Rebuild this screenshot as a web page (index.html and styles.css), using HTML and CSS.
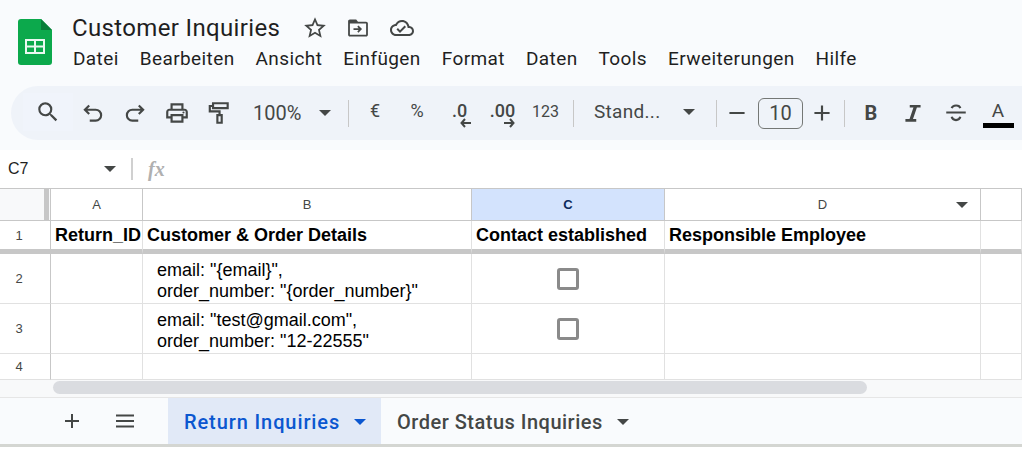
FILE: index.html
```html
<!DOCTYPE html>
<html lang="en">
<head>
    <meta charset="UTF-8">
    <meta name="viewport" content="width=device-width, initial-scale=1.0">
    <title>Customer Inquiries</title>
    <link rel="stylesheet" href="styles.css">
</head>
<body>
    <header class="top">
        <div class="titlebar">
            <svg class="logo" viewBox="0 0 34 46">
                <path d="M3 0H23L34 11V43a3 3 0 0 1-3 3H3a3 3 0 0 1-3-3V3a3 3 0 0 1 3-3z" fill="#0ca94c"/>
                <path d="M23 0L34 11H23z" fill="#0a7f3a"/>
                <path d="M7 20H27V35H7zM9 22V26.500H16V22zM18 22V26.500H25V22zM9 28.500V33H16V28.500zM18 28.500V33H25V28.500z" fill="#fff" fill-rule="evenodd" opacity=".92"/>
            </svg>
            <div class="titletext">
                <div class="docline">
                    <h1>Customer Inquiries</h1>
                    <svg class="star" viewBox="0 0 24 24"><path d="M22 9.240l-7.190-.620L12 2 9.190 8.630 2 9.240l5.460 4.730L5.820 21 12 17.270 18.180 21l-1.630-7.030L22 9.240zM12 15.400l-3.760 2.270 1-4.280-3.320-2.880 4.380-.380L12 6.100l1.710 4.040 4.380.380-3.320 2.880 1 4.280L12 15.400z"/></svg>
                    <svg class="folder" viewBox="0 0 24 20"><path d="M21 3H12L10 0.500H3C1.900 0.500 1 1.400 1 2.500V17.500C1 18.600 1.900 19.500 3 19.500H21C22.100 19.500 23 18.600 23 17.500V5C23 3.900 22.100 3 21 3zM21 17.500H3V5H21V17.500zM12.500 7.200L11.200 8.500 12.700 10.200H7V12.200H12.700L11.200 13.900 12.500 15.200 16.500 11.200z" fill-rule="evenodd"/></svg>
                    <svg class="cloud" viewBox="0 0 24 24"><path d="M19.350 10.040C18.670 6.590 15.640 4 12 4 9.110 4 6.600 5.640 5.350 8.040 2.340 8.360 0 10.910 0 14c0 3.310 2.690 6 6 6h13c2.760 0 5-2.240 5-5 0-2.640-2.050-4.780-4.650-4.960zM19 18H6c-2.210 0-4-1.790-4-4 0-2.050 1.530-3.760 3.560-3.970l1.070-.110.500-.950C8.080 7.140 9.940 6 12 6c2.620 0 4.880 1.860 5.390 4.430l.300 1.500 1.530.110c1.560.100 2.780 1.410 2.780 2.960 0 1.650-1.350 3-3 3zm-9-3.820l-2.090-2.090L6.500 13.500 10 17l6.010-6.010-1.410-1.410z"/></svg>
                </div>
                <nav class="menu">
                    <span>Datei</span>
                    <span>Bearbeiten</span>
                    <span>Ansicht</span>
                    <span>Einfügen</span>
                    <span>Format</span>
                    <span>Daten</span>
                    <span>Tools</span>
                    <span>Erweiterungen</span>
                    <span>Hilfe</span>
                </nav>
            </div>
        </div>

        <div class="toolbar">
            <div class="tool search">
                <svg class="icon" viewBox="0 0 24 24"><path d="M15.500 14h-.790l-.280-.270A6.471 6.471 0 0 0 16 9.500 6.500 6.500 0 1 0 9.500 16c1.610 0 3.090-.590 4.230-1.570l.270.280v.790l5 4.990L20.490 19l-4.990-5zm-6 0C7.010 14 5 11.990 5 9.500S7.010 5 9.500 5 14 7.010 14 9.500 11.990 14 9.500 14z"/></svg>
            </div>
            <div class="tool w40"><svg class="icon line" viewBox="0 0 24 24"><path d="M8.500 5L4.500 9L8.500 13M4.500 9H14.500a5 5 0 0 1 0 10H9"/></svg></div>
            <div class="tool w43"><svg class="icon line" viewBox="0 0 24 24"><path d="M15.500 5L19.500 9L15.500 13M19.500 9H9.500a5 5 0 0 0 0 10H15"/></svg></div>
            <div class="tool w42"><svg class="icon" viewBox="0 0 24 24"><path d="M19 8h-1V3H6v5H5c-1.660 0-3 1.340-3 3v6h4v4h12v-4h4v-6c0-1.660-1.340-3-3-3zM8 5h8v3H8V5zm8 14H8v-4h8v4zm2-4v-2H6v2H4v-4c0-.550.450-1 1-1h14c.550 0 1 .450 1 1v4h-2z"/><circle cx="18" cy="11.500" r="1"/></svg></div>
            <div class="tool w42"><svg class="icon line" viewBox="0 0 24 24"><path d="M6.500 3H20V7.500H6.500zM6.500 5.500H3.500V10.500H12.500V14M10.500 14H14.500V21H10.500z"/></svg></div>
            <div class="tool zoom"><span>100%</span><i class="caret"></i></div>
            <i class="sep"></i>
            <div class="tool w42 sym">€</div>
            <div class="tool w42 sym">%</div>
            <div class="tool w43 dec">
                <span>.0</span>
                <svg class="arrow left" viewBox="0 0 12 10"><path d="M5 1L1.500 5L5 9M2 5H11"/></svg>
            </div>
            <div class="tool w43 dec">
                <span>.00</span>
                <svg class="arrow right" viewBox="0 0 12 10"><path d="M7 1L10.500 5L7 9M10 5H1"/></svg>
            </div>
            <div class="tool w43 num">123</div>
            <i class="sep sep-font"></i>
            <div class="tool fontname"><span>Stand...</span><i class="caret"></i></div>
            <i class="sep"></i>
            <div class="tool minus"><svg class="icon line" viewBox="0 0 24 24"><path d="M5 12H19"/></svg></div>
            <div class="sizebox">10</div>
            <div class="tool w40"><svg class="icon line" viewBox="0 0 24 24"><path d="M5 12H19M12 5V19"/></svg></div>
            <i class="sep sep-format"></i>
            <div class="tool w42 bold">B</div>
            <div class="tool w42"><svg class="icon" viewBox="0 0 24 24"><path d="M9 4.500H19V7H15.600L12 17.500H15V20H5V17.500H8.800L12.400 7H9z"/></svg></div>
            <div class="tool w43"><svg class="icon line" viewBox="0 0 24 24"><path d="M3 11.500H21M8 7.500C9 4.500 15 4 16 7.500M8 15.500C9 19.500 15 19.500 16 15.500"/></svg></div>
            <div class="tool w42 color"><span>A</span><i class="colorbar"></i></div>
        </div>
    </header>

    <div class="formula">
        <span class="cellname">C7</span>
        <i class="caret"></i>
        <i class="formula-sep"></i>
        <span class="fx">fx</span>
    </div>

    <div class="sheet">
        <div class="corner"><i class="freeze"></i></div>
        <div class="col">A</div>
        <div class="col">B</div>
        <div class="col col-active">C</div>
        <div class="col col-menu">D<i class="caret"></i></div>
        <div class="col"></div>

        <div class="rownum head-row">1</div>
        <div class="cell head-row head">Return_ID</div>
        <div class="cell head-row head">Customer &amp; Order Details</div>
        <div class="cell head-row head">Contact established</div>
        <div class="cell head-row head">Responsible Employee</div>
        <div class="cell head-row"></div>

        <div class="rownum">2</div>
        <div class="cell"></div>
        <div class="cell details">email: "{email}",<br>order_number: "{order_number}"</div>
        <div class="cell check"><i class="checkbox"></i></div>
        <div class="cell"></div>
        <div class="cell"></div>

        <div class="rownum">3</div>
        <div class="cell"></div>
        <div class="cell details">email: "test@gmail.com",<br>order_number: "12-22555"</div>
        <div class="cell check"><i class="checkbox"></i></div>
        <div class="cell"></div>
        <div class="cell"></div>

        <div class="rownum">4</div>
        <div class="cell"></div>
        <div class="cell"></div>
        <div class="cell"></div>
        <div class="cell"></div>
        <div class="cell"></div>
    </div>

    <div class="scrollrow"><div class="thumb"></div></div>

    <footer class="tabs">
        <svg class="tabicon add" viewBox="0 0 24 24"><path d="M5 12H19M12 5V19"/></svg>
        <svg class="tabicon all" viewBox="0 0 24 24"><path d="M3 6.500H21M3 12H21M3 17.500H21"/></svg>
        <div class="tab tab-active">Return Inquiries<i class="caret"></i></div>
        <div class="tab">Order Status Inquiries<i class="caret"></i></div>
    </footer>
</body>
</html>
```

FILE: styles.css
```css
* {
    margin: 0;
    padding: 0;
    box-sizing: border-box;
}

body {
    width: 1022px;
    height: 449px;
    overflow: hidden;
    background: #fff;
    font-family: Roboto, 'Liberation Sans', sans-serif;
    color: #444746;
}

i {
    display: block;
}

.caret {
    width: 0;
    height: 0;
    border-left: 6px solid transparent;
    border-right: 6px solid transparent;
    border-top: 6px solid #444746;
}

/* header */
.top {
    height: 150px;
    background: #f9fbfd;
    padding-top: 14px;
}

.titlebar {
    display: flex;
    height: 58px;
}

.logo {
    width: 34px;
    height: 46px;
    margin: 5px 20px 0 18px;
}

.docline {
    display: flex;
    align-items: center;
    height: 28px;
}

h1 {
    font-size: 24px;
    font-weight: 400;
    letter-spacing: .35px;
    color: #1f1f1f;
    width: 230px;
}

.docline svg {
    fill: #444746;
}

.star {
    width: 26px;
    height: 26px;
}

.folder {
    width: 22px;
    height: 18px;
    margin-left: 19px;
}

.cloud {
    width: 24px;
    height: 24px;
    margin-left: 21px;
}

.menu {
    display: flex;
    gap: 21px;
    font-size: 19px;
    letter-spacing: .4px;
    line-height: 24px;
    margin: 5px 0 0 1px;
    color: #1f1f1f;
}

.toolbar {
    display: flex;
    align-items: center;
    height: 54px;
    margin: 14px 0 0 11px;
    padding-left: 12px;
    background: #eff3f9;
    border-radius: 27px 0 0 27px;
    overflow: hidden;
}

.tool {
    display: flex;
    align-items: center;
    justify-content: center;
    flex: none;
    height: 36px;
}

.w40 { width: 40px; }
.w42 { width: 42px; }
.w43 { width: 43px; }

.search {
    width: 50px;
    height: 38px;
    background: #f0f4fb;
    margin-top: -2px;
}

.icon {
    width: 26px;
    height: 26px;
    fill: #444746;
}

.icon.line {
    fill: none;
    stroke: #444746;
    stroke-width: 2;
}

.zoom {
    width: 98px;
    font-size: 20px;
    justify-content: flex-start;
    padding-left: 13px;
}

.zoom .caret {
    margin-left: 18px;
}

.sep {
    flex: none;
    width: 1px;
    height: 27px;
    background: #c7c7c7;
    margin: 0 5px 0 10px;
}

.sym {
    font-size: 18px;
    margin-top: -5px;
}

.dec {
    position: relative;
    font-size: 18px;
    font-weight: 500;
}

.dec span {
    margin-top: -6px;
}

.arrow {
    position: absolute;
    width: 12px;
    height: 10px;
    top: 23px;
    left: 22px;
    fill: none;
    stroke: #444746;
    stroke-width: 2;
}

.num {
    font-size: 16px;
    margin-top: -4px;
}

.sep-font {
    margin: 0 0 0 6px;
}

.fontname {
    width: 132px;
    font-size: 19px;
    letter-spacing: .3px;
    justify-content: flex-start;
    padding-left: 20px;
    margin-top: -3px;
}

.fontname .caret {
    margin-left: 23px;
}

.minus {
    width: 30px;
    margin-right: 6px;
}

.sizebox {
    flex: none;
    width: 45px;
    height: 31px;
    border: 1px solid #747775;
    border-radius: 6px;
    font-size: 20px;
    line-height: 28px;
    text-align: center;
    margin-right: -1px;
}

.sep-format {
    margin: 0 5px 0 2px;
}

.bold {
    font-size: 20px;
    font-weight: 700;
}

.color {
    flex-direction: column;
    font-size: 19px;
    line-height: 18px;
    margin-top: 3px;
}

.colorbar {
    width: 31px;
    height: 5px;
    background: #000;
    margin-top: 3px;
}

/* formula bar */
.formula {
    display: flex;
    align-items: center;
    height: 38px;
    background: #fff;
    padding: 0 0 0 8px;
}

.cellname {
    width: 96px;
    font-size: 16px;
    font-family: 'Liberation Sans', sans-serif;
    color: #1f1f1f;
}

.formula-sep {
    width: 2px;
    height: 22px;
    background: #d0d0d0;
    margin: 0 15px 0 15px;
}

.fx {
    font-family: 'Liberation Serif', serif;
    font-style: italic;
    font-weight: 700;
    font-size: 20px;
    color: #b0b0b0;
}

/* sheet */
.sheet {
    display: grid;
    grid-template-columns: 51px 92px 329px 193px 316px 41px;
    grid-template-rows: 32px 33px 50px 50px 26px;
    font-family: 'Liberation Sans', sans-serif;
    border-top: 1px solid #c7c7c7;
    height: 192px;
}

.corner {
    background: #f8f9fa;
    border-right: 1px solid #c7c7c7;
    border-bottom: 1px solid #c7c7c7;
    display: flex;
    justify-content: flex-end;
}

.freeze {
    width: 5px;
    background: #c7c7c7;
    margin-right: 1px;
}

.col {
    display: flex;
    align-items: center;
    justify-content: center;
    position: relative;
    font-size: 13px;
    color: #444746;
    border-right: 1px solid #c7c7c7;
    border-bottom: 1px solid #c7c7c7;
}

.col-active {
    background: #d3e3fd;
    font-weight: 700;
    color: #0b2a5c;
}

.col-menu .caret {
    position: absolute;
    right: 12px;
    top: 13px;
}

.rownum {
    display: flex;
    align-items: center;
    justify-content: center;
    padding-right: 12px;
    font-size: 13px;
    color: #444746;
    border-right: 1px solid #c7c7c7;
    border-bottom: 1px solid #e1e1e1;
}

.cell {
    border-right: 1px solid #e1e1e1;
    border-bottom: 1px solid #e1e1e1;
    font-size: 18px;
    color: #000;
    white-space: nowrap;
    overflow: hidden;
}

.head-row {
    border-bottom: 5px solid #c7c7c7;
}

.head {
    font-weight: 700;
    padding: 4px 0 0 4px;
    line-height: 20px;
}

.details {
    padding: 6px 0 0 14px;
    line-height: 21px;
}

.check {
    display: flex;
    align-items: center;
    justify-content: center;
}

.checkbox {
    width: 22px;
    height: 22px;
    border: 3px solid #8a8a8a;
    border-radius: 3px;
}

.scrollrow {
    height: 17px;
    background: #f8f9fa;
    padding: 1px 0 2px 53px;
}

.thumb {
    width: 814px;
    height: 13px;
    background: #dadce0;
    border-radius: 7px;
}

/* tabs */
.tabs {
    display: flex;
    align-items: center;
    height: 50px;
    background: #f9fbfd;
    border-top: 1px solid #e6e6e6;
    border-bottom: 3px solid #d4d6d2;
}

.tabicon {
    flex: none;
    width: 24px;
    height: 24px;
    fill: none;
    stroke: #444746;
    stroke-width: 2;
}

.add {
    margin-left: 60px;
}

.all {
    margin: 0 31px 0 29px;
}

.tab {
    display: flex;
    align-items: center;
    height: 100%;
    padding: 2px 16px 0;
    font-size: 20px;
    font-weight: 500;
    letter-spacing: .5px;
    color: #444746;
    white-space: nowrap;
}

.tab .caret {
    margin-left: 14px;
}

.tab-active {
    width: 213px;
    background: #e1e9f7;
    color: #0b57d0;
    letter-spacing: .9px;
}

.tab-active .caret {
    border-top-color: #0b57d0;
}
```
